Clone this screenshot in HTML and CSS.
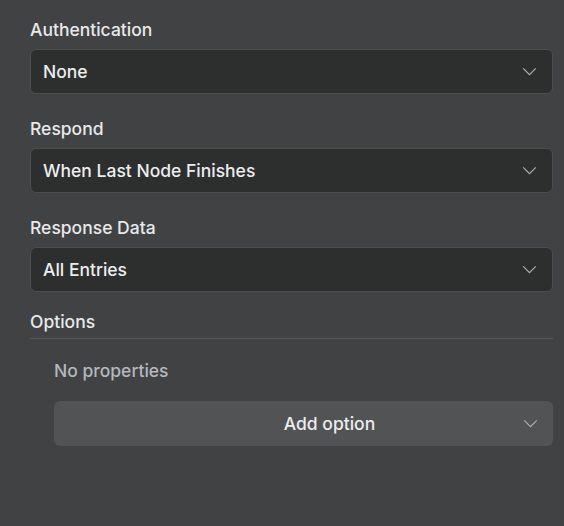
FILE: index.html
```html
<!DOCTYPE html>
<html lang="en">
<head>
    <meta charset="UTF-8">
    <title>Webhook Settings</title>
    <link rel="stylesheet" href="styles.css">
</head>
<body>
    <main class="panel">
        <div class="field">
            <label class="field-label">Authentication</label>
            <div class="select">
                <span>None</span>
                <svg class="chevron" viewBox="0 0 16 10"><path d="M1 1.5 8 8.5 15 1.5"/></svg>
            </div>
        </div>

        <div class="field">
            <label class="field-label">Respond</label>
            <div class="select">
                <span>When Last Node Finishes</span>
                <svg class="chevron" viewBox="0 0 16 10"><path d="M1 1.5 8 8.5 15 1.5"/></svg>
            </div>
        </div>

        <div class="field">
            <label class="field-label">Response Data</label>
            <div class="select">
                <span>All Entries</span>
                <svg class="chevron" viewBox="0 0 16 10"><path d="M1 1.5 8 8.5 15 1.5"/></svg>
            </div>
        </div>

        <section class="options">
            <div class="options-title">Options</div>
            <div class="options-body">
                <p class="empty">No properties</p>
                <button class="add-option">
                    <span>Add option</span>
                    <svg class="chevron" viewBox="0 0 16 10"><path d="M1 1.5 8 8.5 15 1.5"/></svg>
                </button>
            </div>
        </section>
    </main>
</body>
</html>
```

FILE: styles.css
```css
body {
    margin: 0;
    background: #414244;
    font-family: Inter, "Noto Sans", sans-serif;
    color: #e8e9ea;
}

.panel {
    padding: 20px 11px 20px 30px;
}

.field {
    margin-bottom: 25px;
}

.field-label {
    display: block;
    font-size: 17.5px;
    font-weight: 500;
    line-height: 20px;
    margin-bottom: 9px;
    color: #e8e9ea;
}

.select {
    display: flex;
    align-items: center;
    justify-content: space-between;
    height: 43px;
    padding: 0 15px 0 12px;
    background: #2d2e2e;
    border: 1px solid #4d4e50;
    border-radius: 6px;
    font-size: 17.5px;
    font-weight: 500;
    color: #ecedee;
}

.chevron {
    width: 15px;
    height: 9px;
    fill: none;
    stroke: #a9acb1;
    stroke-width: 1.4;
}

.options {
    margin-top: -5px;
}

.options-title {
    font-size: 17.5px;
    font-weight: 500;
    line-height: 20px;
    padding-bottom: 6px;
    border-bottom: 1px solid #56575a;
}

.options-body {
    padding-left: 24px;
}

.empty {
    margin: 22px 0 20px;
    font-size: 17.5px;
    font-weight: 500;
    line-height: 20px;
    color: #b5b8be;
}

.add-option {
    display: flex;
    align-items: center;
    justify-content: space-between;
    width: 100%;
    height: 45px;
    padding: 0 15px 0 12px;
    border: none;
    border-radius: 6px;
    background: #525355;
    font-family: inherit;
    font-size: 17.5px;
    font-weight: 500;
    color: #ecedee;
}

.add-option span {
    flex: 1;
    text-align: center;
    padding-left: 70px;
}
```
